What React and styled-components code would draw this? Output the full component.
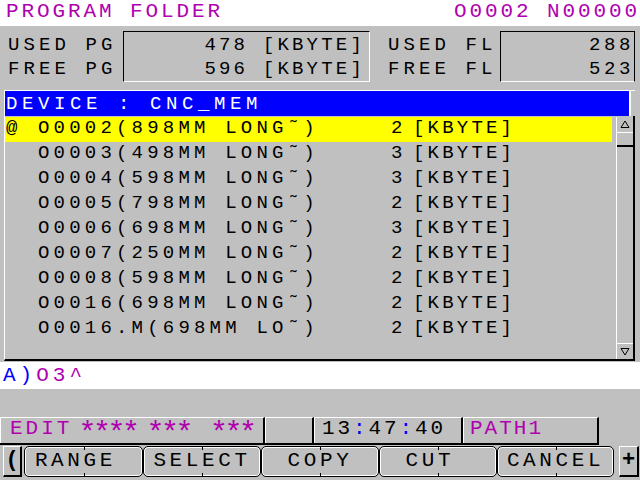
import React from 'react';
import styled, { createGlobalStyle } from 'styled-components';

const MAGENTA = '#b000b0';
const GRAY = '#c0c0c0';
const BLUE = '#0000ff';

const GlobalStyle = createGlobalStyle`
  html, body {
    margin: 0;
    padding: 0;
    background: ${GRAY};
  }
  body {
    width: 640px;
    height: 480px;
    overflow: hidden;
    font-family: "Liberation Mono", "DejaVu Sans Mono", monospace;
  }
`;

const Screen = styled.div`
  width: 640px;
  height: 480px;
  background: ${GRAY};
  color: #000;
  display: flex;
  flex-direction: column;
  white-space: pre;
`;

const TitleBar = styled.div`
  height: 26px;
  flex: none;
  background: #fff;
  display: flex;
  justify-content: space-between;
  padding: 0 0 0 6px;
  color: ${MAGENTA};
  font-size: 21px;
  line-height: 24px;
  letter-spacing: 2.9px;
`;

const MemPanel = styled.div`
  height: 64px;
  flex: none;
  box-sizing: border-box;
  padding: 5px 0 0 8px;
  display: flex;
  align-items: flex-start;
  font-size: 19px;
  line-height: 24px;
`;

const MemLabels = styled.div`
  width: ${(p) => p.$w}px;
  padding: 2px 0 0 ${(p) => p.$pad || 0}px;
  box-sizing: border-box;
  letter-spacing: 4.1px;
`;

const MemBox = styled.div`
  width: ${(p) => p.$w}px;
  height: 51px;
  box-sizing: border-box;
  border-top: 1px solid #000;
  border-left: 1px solid #000;
  border-bottom: 1px solid #fff;
  border-right: 1px solid ${(p) => (p.$dark ? '#000' : '#fff')};
  padding: 1px ${(p) => p.$right}px 0 0;
  text-align: right;
  letter-spacing: ${(p) => p.$ls}px;
`;

const DevicePanel = styled.div`
  height: 271px;
  flex: none;
  box-sizing: border-box;
  margin-left: 4px;
  width: 631px;
  border-top: 1px solid #fff;
  border-left: 1px solid #fff;
  border-bottom: 2px solid #000;
  display: flex;
  flex-direction: column;
  font-size: 19px;
`;

const DeviceHeader = styled.div`
  height: 25px;
  flex: none;
  margin-right: 4px;
  border-right: 2px solid #fff;
  background: ${BLUE};
  color: #fff;
  padding-left: 1px;
  line-height: 27px;
  letter-spacing: 4.6px;
`;

const DeviceBody = styled.div`
  flex: 1;
  display: flex;
  padding-top: 1px;
  border-right: 2px solid #000;
`;

const FileList = styled.div`
  width: 608px;
  margin-right: 4px;
  display: flex;
  flex-direction: column;
`;

const FileRow = styled.div`
  height: 25px;
  display: grid;
  grid-template-columns: 32px 353px 22px 1fr;
  padding-left: 1px;
  line-height: 23px;
  background: ${(p) => (p.$active ? '#ffff00' : 'transparent')};
`;

const FileName = styled.span`
  letter-spacing: 4.2px;
`;

const Unit = styled.span`
  letter-spacing: 3.2px;
`;

const ScrollBar = styled.div`
  width: 16px;
  border-left: 1px solid #fff;
  display: flex;
  flex-direction: column;
`;

const ArrowBtn = styled.div`
  height: 16px;
  flex: none;
  box-sizing: border-box;
  display: flex;
  align-items: center;
  justify-content: center;
  border-top: ${(p) => (p.$down ? '1px solid #fff' : 'none')};
  border-bottom: ${(p) => (p.$down ? 'none' : '1px solid #fff')};
`;

const Thumb = styled.div`
  height: 14px;
  flex: none;
  box-sizing: border-box;
  border-bottom: 2px solid #000;
`;

const Track = styled.div`
  flex: 1;
`;

const CommandLine = styled.div`
  height: 27px;
  flex: none;
  margin-top: 1px;
  background: #fff;
  padding-left: 3px;
  font-size: 21px;
  line-height: 27px;
  letter-spacing: 4px;
`;

const Tint = styled.span`
  color: ${(p) => p.$color};
`;

const Spacer = styled.div`
  height: ${(p) => p.$h}px;
  flex: none;
`;

const StatusBar = styled.div`
  width: 599px;
  height: 28px;
  flex: none;
  box-sizing: border-box;
  display: flex;
  border-bottom: 2px solid #000;
  font-size: 21px;
  line-height: 22px;
`;

const StatusCell = styled.div`
  width: ${(p) => p.$w}px;
  box-sizing: border-box;
  border-top: 1px solid #fff;
  border-left: 1px solid #fff;
  border-right: 2px solid #000;
  padding-left: ${(p) => p.$pad || 0}px;
  color: ${(p) => p.$color || '#000'};
  letter-spacing: ${(p) => p.$ls || 0}px;
`;

const Stars = styled.span`
  position: relative;
  top: 8px;
  margin-left: ${(p) => p.$ml}px;
  font-size: 30px;
  line-height: 1px;
  letter-spacing: -3.5px;
`;

const SoftKeyRow = styled.div`
  height: 35px;
  flex: none;
  box-sizing: border-box;
  padding: 1px 0 0 3px;
  display: flex;
  align-items: flex-start;
`;

const SideKey = styled.div`
  width: ${(p) => p.$w}px;
  height: 31px;
  box-sizing: border-box;
  margin-left: ${(p) => p.$ml || 0}px;
  border-top: 1px solid #fff;
  border-left: 1px solid #fff;
  border-right: 2px solid #000;
  border-bottom: 2px solid #000;
  display: flex;
  align-items: center;
  justify-content: center;
  font-size: 22px;
  font-weight: bold;
  line-height: 26px;
`;

const SoftKey = styled.div`
  position: relative;
  width: ${(p) => p.$w}px;
  height: 31px;
  box-sizing: border-box;
  border: 1px solid #000;
  border-radius: 5px;
  box-shadow: inset 0 0 0 1px #fff;
  text-align: center;
  font-size: 21px;
  line-height: 28px;
  letter-spacing: 3.6px;
  &::before,
  &::after {
    content: '';
    position: absolute;
    left: 50%;
    width: 1px;
    height: 3px;
    background: #000;
  }
  &::before {
    top: 0;
  }
  &::after {
    bottom: 0;
  }
`;

const SoftKeys = styled.div`
  display: flex;
  margin-left: 2px;
`;

const files = [
  { name: 'O0002(898MM LONG˜)', size: 2, active: true },
  { name: 'O0003(498MM LONG˜)', size: 3 },
  { name: 'O0004(598MM LONG˜)', size: 3 },
  { name: 'O0005(798MM LONG˜)', size: 2 },
  { name: 'O0006(698MM LONG˜)', size: 3 },
  { name: 'O0007(250MM LONG˜)', size: 2 },
  { name: 'O0008(598MM LONG˜)', size: 2 },
  { name: 'O0016(698MM LONG˜)', size: 2 },
  { name: 'O0016.M(698MM LO˜)', size: 2 },
];

const keys = [
  { label: 'RANGE\u00a0', w: 119 },
  { label: 'SELECT', w: 118 },
  { label: 'COPY', w: 118 },
  { label: 'CUT\u00a0', w: 118 },
  { label: 'CANCEL', w: 117 },
];

function Triangle({ down }) {
  return (
    <svg width="10" height="9" viewBox="0 0 10 9">
      <polygon
        points={down ? '1,1.5 9,1.5 5,8' : '5,1 9,7.5 1,7.5'}
        fill="none"
        stroke="#000"
        strokeWidth="1"
      />
    </svg>
  );
}

export default function App() {
  return (
    <Screen>
      <GlobalStyle />
      <TitleBar>
        <span>PROGRAM FOLDER</span>
        <span>O0002 N00000</span>
      </TitleBar>

      <MemPanel>
        <MemLabels $w={115}>
          <div>USED PG</div>
          <div>FREE PG</div>
        </MemLabels>
        <MemBox $w={247} $right={4} $ls={3.2}>
          <div>478 [KBYTE]</div>
          <div>596 [KBYTE]</div>
        </MemBox>
        <MemLabels $w={130} $pad={18}>
          <div>USED FL</div>
          <div>FREE FL</div>
        </MemLabels>
        <MemBox $w={135} $right={0} $ls={3.6} $dark>
          <div>288</div>
          <div>523</div>
        </MemBox>
      </MemPanel>

      <DevicePanel>
        <DeviceHeader>DEVICE : CNC_MEM</DeviceHeader>
        <DeviceBody>
          <FileList>
            {files.map((f) => (
              <FileRow key={f.name} $active={f.active}>
                <span>{f.active ? '@' : ''}</span>
                <FileName>{f.name}</FileName>
                <span>{f.size}</span>
                <Unit>[KBYTE]</Unit>
              </FileRow>
            ))}
          </FileList>
          <ScrollBar>
            <ArrowBtn>
              <Triangle />
            </ArrowBtn>
            <Thumb />
            <Track />
            <ArrowBtn $down>
              <Triangle down />
            </ArrowBtn>
          </ScrollBar>
        </DeviceBody>
      </DevicePanel>

      <CommandLine>
        <Tint $color={BLUE}>A)</Tint>
        <Tint $color={MAGENTA}>O3^</Tint>
      </CommandLine>

      <Spacer $h={28} />

      <StatusBar>
        <StatusCell $w={265} $pad={9} $ls={3} $color={MAGENTA}>
          EDIT
          <Stars $ml={6}>****</Stars>
          <Stars $ml={10}>***</Stars>
          <Stars $ml={20}>***</Stars>
        </StatusCell>
        <StatusCell $w={49} />
        <StatusCell $w={149} $pad={7} $ls={2.9}>
          13<Tint $color={BLUE}>:</Tint>47<Tint $color={BLUE}>:</Tint>40
        </StatusCell>
        <StatusCell $w={136} $pad={6} $ls={2} $color={MAGENTA}>
          PATH1
        </StatusCell>
      </StatusBar>

      <SoftKeyRow>
        <SideKey $w={19}>(</SideKey>
        <SoftKeys>
          {keys.map((k) => (
            <SoftKey key={k.label} $w={k.w}>
              {k.label}
            </SoftKey>
          ))}
        </SoftKeys>
        <SideKey $w={20} $ml={5}>
          +
        </SideKey>
      </SoftKeyRow>
    </Screen>
  );
}
